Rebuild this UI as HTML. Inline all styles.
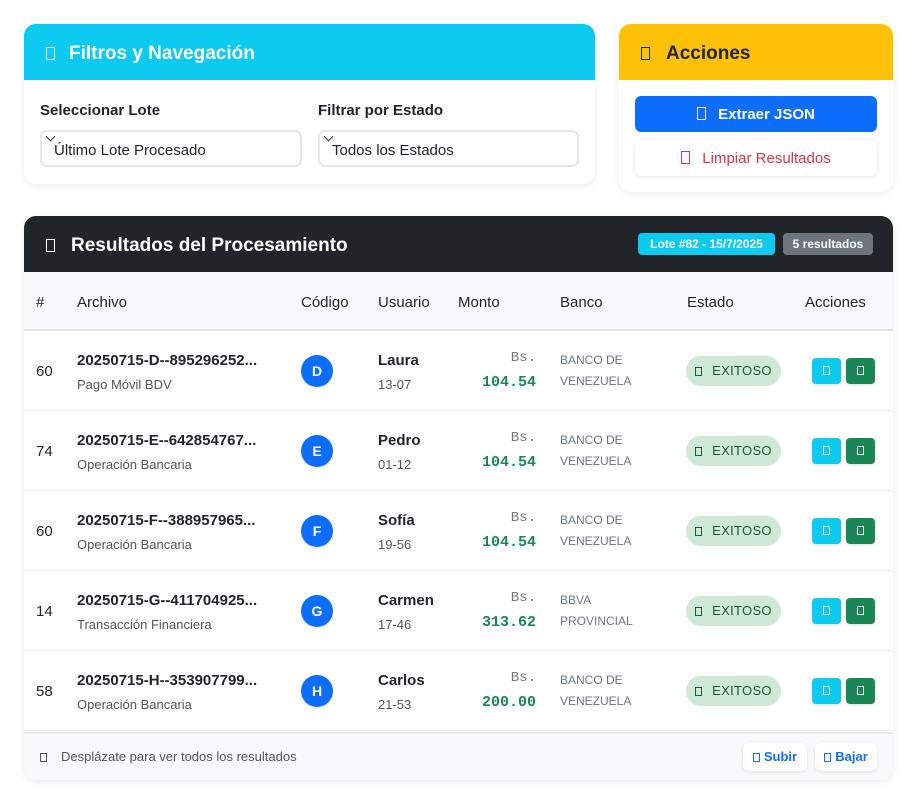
<!DOCTYPE html>
<html><head><meta charset="utf-8"><style>
*{box-sizing:border-box;margin:0;padding:0}
body{width:917px;height:802px;background:#fff;font-family:"Liberation Sans",sans-serif;color:#212529;position:relative;overflow:hidden}
.a{position:absolute}
.card{position:absolute;background:#fff;border-radius:12px;box-shadow:0 2px 8px rgba(0,0,0,.08);overflow:hidden}
.tofu{display:inline-block;width:9px;height:13px;border:1px solid currentColor;vertical-align:-1px}
.sm{width:7px;height:9px}
.sel{position:absolute;top:106px;height:37px;border:2px solid #e4e7eb;border-radius:7px;font-size:15px;padding:10px 12px}
.sel:before{content:"";position:absolute;left:5px;top:1px;width:6px;height:6px;border-right:1.5px solid #333;border-bottom:1.5px solid #333;transform:rotate(45deg)}
.lbl{position:absolute;top:78px;font-size:15px;font-weight:bold}
.row{position:absolute;left:0;width:869px;height:80px;border-bottom:1px solid #eef0f2}
.num{left:12px;top:32px;font-size:15px}
.f1{left:53px;top:21px;font-size:15px;font-weight:bold}
.f2{left:53px;top:46px;font-size:13px;color:#555}
.av{left:277px;top:24px;width:32px;height:32px;border-radius:50%;background:#0d6efd;color:#fff;font-weight:bold;font-size:14px;text-align:center;line-height:32px}
.u1{left:354px;top:21px;font-size:15px;font-weight:bold}
.u2{left:354px;top:46px;font-size:13px;color:#555}
.m1{right:357px;top:19px;font-family:"Liberation Mono",monospace;font-size:14px;color:#777}
.m2{right:357px;top:43px;font-family:"Liberation Mono",monospace;font-size:15px;color:#198754;font-weight:bold}
.b{left:536px;top:19px;font-size:12px;color:#6c757d;line-height:21px}
.st{left:662px;top:25px;width:95px;height:30px;border-radius:15px;background:#cfe9d7;color:#1e5631;font-size:13px;text-align:center;line-height:30px;letter-spacing:.3px}
.i1,.i2{top:27px;width:29px;height:26px;border-radius:4px;color:#fff;text-align:center;line-height:24px;box-shadow:0 1px 3px rgba(0,0,0,.15)}
.i1{left:788px;background:#0dcaf0}.i2{left:822px;background:#198754}
.hd{position:absolute;left:0;top:0;height:56px;font-size:19px;font-weight:bold;padding:19px 0 0 22px}
</style></head><body>

<div class="card" style="left:24px;top:24px;width:571px;height:160px">
 <div class="hd" style="width:571px;background:#0dcaf0;color:#fff"><span class="tofu" style="margin-right:14px"></span>Filtros y Navegación</div>
 <div class="lbl" style="left:16px">Seleccionar Lote</div>
 <div class="lbl" style="left:294px">Filtrar por Estado</div>
 <div class="sel" style="left:16px;width:262px">Último Lote Procesado</div>
 <div class="sel" style="left:294px;width:261px">Todos los Estados</div>
</div>

<div class="card" style="left:619px;top:24px;width:274px;height:168px">
 <div class="hd" style="width:274px;background:#ffc107;color:#212529"><span class="tofu" style="margin-right:16px"></span>Acciones</div>
 <div class="a" style="left:16px;top:72px;width:242px;height:36px;background:#0d6efd;border-radius:6px;color:#fff;font-weight:bold;font-size:15px;text-align:center;line-height:38px"><span class="tofu" style="margin-right:12px"></span>Extraer JSON</div>
 <div class="a" style="left:16px;top:116px;width:242px;height:36px;background:#fff;border-radius:6px;box-shadow:0 1px 4px rgba(0,0,0,.12);color:#dc3545;font-size:15px;text-align:center;line-height:38px"><span class="tofu" style="margin-right:12px"></span>Limpiar Resultados</div>
</div>

<div class="card" style="left:24px;top:216px;width:869px;height:564px">
 <div class="hd" style="width:869px;background:#212529;color:#fff"><span class="tofu" style="margin-right:16px"></span>Resultados del Procesamiento</div>
 <div class="a" style="left:614px;top:17px;width:137px;height:22px;background:#0dcaf0;border-radius:4px;color:#fff;font-size:12px;font-weight:bold;text-align:center;line-height:22px">Lote #82 - 15/7/2025</div>
 <div class="a" style="left:759px;top:17px;width:90px;height:22px;background:#6c757d;border-radius:4px;color:#fff;font-size:12px;font-weight:bold;text-align:center;line-height:22px">5 resultados</div>
 <div class="a" style="left:0;top:56px;width:869px;height:59px;background:#f8f9fa;border-bottom:2px solid #dee2e6;font-size:15px">
  <span class="a" style="left:12px;top:22px">#</span>
  <span class="a" style="left:53px;top:22px">Archivo</span>
  <span class="a" style="left:277px;top:22px">Código</span>
  <span class="a" style="left:354px;top:22px">Usuario</span>
  <span class="a" style="left:434px;top:22px">Monto</span>
  <span class="a" style="left:536px;top:22px">Banco</span>
  <span class="a" style="left:663px;top:22px">Estado</span>
  <span class="a" style="left:781px;top:22px">Acciones</span>
 </div>

 <div class="row" style="top:115px"><span class="a num">60</span><span class="a f1">20250715-D--895296252...</span><span class="a f2">Pago Móvil BDV</span><span class="a av">D</span><span class="a u1">Laura</span><span class="a u2">13-07</span><span class="a m1">Bs.</span><span class="a m2">104.54</span><span class="a b">BANCO DE<br>VENEZUELA</span><span class="a st"><span class="tofu sm" style="margin-right:10px"></span>EXITOSO</span><span class="a i1"><span class="tofu sm"></span></span><span class="a i2"><span class="tofu sm"></span></span></div>
 <div class="row" style="top:195px"><span class="a num">74</span><span class="a f1">20250715-E--642854767...</span><span class="a f2">Operación Bancaria</span><span class="a av">E</span><span class="a u1">Pedro</span><span class="a u2">01-12</span><span class="a m1">Bs.</span><span class="a m2">104.54</span><span class="a b">BANCO DE<br>VENEZUELA</span><span class="a st"><span class="tofu sm" style="margin-right:10px"></span>EXITOSO</span><span class="a i1"><span class="tofu sm"></span></span><span class="a i2"><span class="tofu sm"></span></span></div>
 <div class="row" style="top:275px"><span class="a num">60</span><span class="a f1">20250715-F--388957965...</span><span class="a f2">Operación Bancaria</span><span class="a av">F</span><span class="a u1">Sofía</span><span class="a u2">19-56</span><span class="a m1">Bs.</span><span class="a m2">104.54</span><span class="a b">BANCO DE<br>VENEZUELA</span><span class="a st"><span class="tofu sm" style="margin-right:10px"></span>EXITOSO</span><span class="a i1"><span class="tofu sm"></span></span><span class="a i2"><span class="tofu sm"></span></span></div>
 <div class="row" style="top:355px"><span class="a num">14</span><span class="a f1">20250715-G--411704925...</span><span class="a f2">Transacción Financiera</span><span class="a av">G</span><span class="a u1">Carmen</span><span class="a u2">17-46</span><span class="a m1">Bs.</span><span class="a m2">313.62</span><span class="a b">BBVA<br>PROVINCIAL</span><span class="a st"><span class="tofu sm" style="margin-right:10px"></span>EXITOSO</span><span class="a i1"><span class="tofu sm"></span></span><span class="a i2"><span class="tofu sm"></span></span></div>
 <div class="row" style="top:435px"><span class="a num">58</span><span class="a f1">20250715-H--353907799...</span><span class="a f2">Operación Bancaria</span><span class="a av">H</span><span class="a u1">Carlos</span><span class="a u2">21-53</span><span class="a m1">Bs.</span><span class="a m2">200.00</span><span class="a b">BANCO DE<br>VENEZUELA</span><span class="a st"><span class="tofu sm" style="margin-right:10px"></span>EXITOSO</span><span class="a i1"><span class="tofu sm"></span></span><span class="a i2"><span class="tofu sm"></span></span></div>

 <div class="a" style="left:0;top:516px;width:869px;height:48px;background:#f8f9fa;border-top:2px solid #e9ecef;font-size:13px;color:#555">
  <span class="a" style="left:16px;top:15px"><span class="tofu sm" style="margin-right:14px"></span>Desplázate para ver todos los resultados</span>
  <span class="a" style="left:719px;top:9px;width:64px;height:28px;background:#fff;border-radius:6px;box-shadow:0 1px 3px rgba(0,0,0,.1);color:#0d6efd;font-weight:bold;text-align:center;line-height:28px"><span class="tofu sm" style="margin-right:4px"></span>Subir</span>
  <span class="a" style="left:791px;top:9px;width:62px;height:28px;background:#fff;border-radius:6px;box-shadow:0 1px 3px rgba(0,0,0,.1);color:#0d6efd;font-weight:bold;text-align:center;line-height:28px"><span class="tofu sm" style="margin-right:4px"></span>Bajar</span>
 </div>
</div>
</body></html>
